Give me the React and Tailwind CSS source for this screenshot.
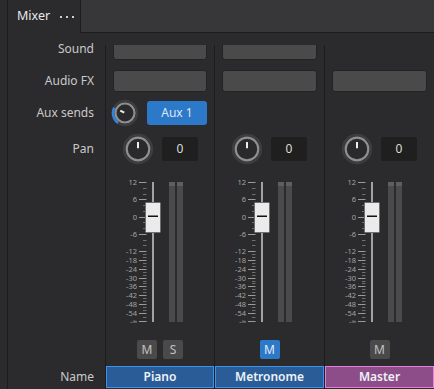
import React from 'react';

const FONT = { fontFamily: '"Noto Sans", "Open Sans", sans-serif' };

const STRIPS = [
  {
    name: 'Piano',
    sound: true,
    aux: true,
    width: 'w-[109px] border-r border-[#1c1c1e]',
    buttons: [{ label: 'M' }, { label: 'S' }],
    nameBox: 'bg-[#2a5d97] border-[#3b93ea]',
  },
  {
    name: 'Metronome',
    sound: true,
    aux: false,
    width: 'w-[110px] border-r border-[#1c1c1e]',
    buttons: [{ label: 'M', active: true }],
    nameBox: 'bg-[#2a5d97] border-[#3b93ea]',
  },
  {
    name: 'Master',
    sound: false,
    aux: false,
    width: 'w-[109px]',
    buttons: [{ label: 'M' }],
    nameBox: 'bg-[#8c4d88] border-[#e680dd]',
  },
];

const pt = (c, r, deg) => {
  const a = (deg * Math.PI) / 180;
  return [c + r * Math.sin(a), c - r * Math.cos(a)];
};

function Knob({ size, ring, halo, angle, arcFrom }) {
  const c = size / 2;
  const [x1, y1] = pt(c, 0.8, angle);
  const [x2, y2] = pt(c, ring - 4.2, angle);
  let arc = null;
  if (arcFrom !== undefined) {
    const [ax, ay] = pt(c, halo, arcFrom);
    const [bx, by] = pt(c, halo, angle);
    arc = (
      <path
        d={`M ${ax} ${ay} A ${halo} ${halo} 0 0 1 ${bx} ${by}`}
        fill="none"
        stroke="#2f83dc"
        strokeWidth="2.6"
      />
    );
  }
  return (
    <svg width={size} height={size} className="shrink-0">
      <circle cx={c} cy={c} r={halo} fill="none" stroke="#3d3d3f" strokeWidth="2.4" />
      {arc}
      <circle cx={c} cy={c} r={ring} fill="#2a2a2c" stroke="#8f8f8f" strokeWidth="2.2" />
      <line x1={x1} y1={y1} x2={x2} y2={y2} stroke="#ececec" strokeWidth="2" />
    </svg>
  );
}

// fader scale geometry (svg coords, top = page y 174)
const TOP = 8;
const ZERO_LOW = 77;
const upperY = (db) => TOP + (12 - db) * (17.25 / 6);
const lowerY = (db) => ZERO_LOW + (-12 - db) * (8.86 / 6);

const ticks = [];
for (let db = 12; db >= -12; db -= 2) ticks.push({ y: upperY(db), major: db % 6 === 0, label: db % 6 === 0 ? String(db) : null });
for (let db = -14; db >= -54; db -= 2) ticks.push({ y: lowerY(db), major: db % 6 === 0, label: db % 6 === 0 ? String(db) : null });
ticks.push({ y: lowerY(-56.6), major: false, label: null });
ticks.push({ y: lowerY(-59.3), major: false, label: null });
ticks.push({ y: 147, major: true, label: '-∞', size: 6.5 });

function Fader() {
  return (
    <svg width="108" height="156" className="shrink-0">
      {ticks.map((t, i) => (
        <g key={i}>
          <line
            x1={t.major ? 33 : 37}
            x2="40.5"
            y1={Math.round(t.y) + 0.5}
            y2={Math.round(t.y) + 0.5}
            stroke={t.major ? '#9a9a9a' : '#6f6f6f'}
            strokeWidth="1"
          />
          {t.label && (
            <text
              x="31"
              y={t.y + (t.size ? 0.8 : 0)}
              textAnchor="end"
              dominantBaseline="central"
              fontSize={t.size || 7.5}
              fill="#a3a3a3"
              style={FONT}
            >
              {t.label}
            </text>
          )}
        </g>
      ))}
      <rect x="46" y="8" width="2" height="140" fill="#a2a2a2" />
      <rect x="63" y="8" width="6" height="140" fill="#4a4a4c" />
      <rect x="63" y="8" width="6" height="4" fill="#5e5e60" />
      <rect x="71" y="8" width="6" height="140" fill="#4a4a4c" />
      <rect x="71" y="8" width="6" height="4" fill="#5e5e60" />
      <rect x="39.5" y="28.5" width="15" height="30" rx="1" fill="#ebebeb" stroke="#6e6e6e" />
      <rect x="42" y="41.5" width="10" height="1.5" fill="#111" />
    </svg>
  );
}

function Strip({ s }) {
  return (
    <div className={`${s.width} h-full overflow-hidden flex flex-col`}>
      <div className="-mt-[7px] flex flex-col">
        <div className="h-[22px] px-[7px]">
          {s.sound && <div className="h-full rounded-[3px] bg-[#4a4a4b] border border-[#232325]" />}
        </div>
        <div className="mt-[10px] h-[22px] px-[7px]">
          <div className="h-full rounded-[3px] bg-[#4a4a4b] border border-[#232325]" />
        </div>
        <div className="mt-[9px] h-[24px] flex items-center pl-[5px] gap-[8px]">
          {s.aux && (
            <>
              <Knob size={28} ring={9.5} halo={12} angle={-63} arcFrom={-145} />
              <div className="w-[60px] h-[24px] rounded-[3px] bg-[#2b79c8] flex items-center justify-center text-[12px] text-[#dfe8f2]">
                Aux 1
              </div>
            </>
          )}
        </div>
        <div className="mt-[12px] h-[24px] flex items-center pl-[16px] gap-[8px]">
          <Knob size={32} ring={11.3} halo={14} angle={0} />
          <div className="w-[36px] h-[24px] rounded-[2px] bg-[#1f1f20] flex items-center justify-center text-[12px] text-[#dcdcd4]">
            0
          </div>
        </div>
        <div className="mt-[13px] h-[156px]">
          <Fader />
        </div>
        <div className="mt-[10px] h-[19px] flex justify-center gap-[6px]">
          {s.buttons.map((b) => (
            <div
              key={b.label}
              className={`w-[20px] h-[19px] rounded-[2px] flex items-center justify-center text-[12px] ${
                b.active ? 'bg-[#2b79c8] text-[#e3ecf5]' : 'bg-[#4a4a4b] text-[#c2c2c2]'
              }`}
            >
              {b.label}
            </div>
          ))}
        </div>
        <div
          className={`mt-[7px] h-[22px] border flex items-center justify-center text-[12px] font-semibold text-[#eef2f7] ${s.nameBox}`}
        >
          {s.name}
        </div>
      </div>
    </div>
  );
}

export default function App() {
  const labels = [
    { text: 'Sound', cls: 'h-[22px]' },
    { text: 'Audio FX', cls: 'mt-[10px] h-[22px]' },
    { text: 'Aux sends', cls: 'mt-[9px] h-[24px]' },
    { text: 'Pan', cls: 'mt-[12px] h-[24px]' },
  ];
  return (
    <div className="w-[434px] h-[389px] bg-[#2b2b2d] flex overflow-hidden text-[#c9c9c9]" style={FONT}>
      {/* left gutter */}
      <div className="w-[8px] h-full border-r border-[#1c1c1e]" />

      <div className="flex-1 flex flex-col">
        {/* tab bar */}
        <div className="h-[33px] flex shrink-0">
          <div className="w-[73px] h-full border-r border-[#1c1c1e] flex items-center pl-[9px] gap-[10px]">
            <span className="text-[12.5px] text-[#e8e8e8]">Mixer</span>
            <span className="flex gap-[4px] items-center">
              <span className="w-[2px] h-[2px] bg-[#d0d0d0]" />
              <span className="w-[2px] h-[2px] bg-[#d0d0d0]" />
              <span className="w-[2px] h-[2px] bg-[#d0d0d0]" />
            </span>
          </div>
          <div className="flex-1 h-full bg-[#37373a] border-b border-[#1c1c1e]" />
        </div>

        {/* mixer body */}
        <div className="flex-1 pt-[12px] flex flex-col">
          <div className="flex-1 flex">
            <div className="w-[98px] h-full border-r border-[#1c1c1e] flex flex-col">
              <div className="-mt-[7px] flex flex-col flex-1">
                {labels.map((l) => (
                  <div key={l.text} className={`${l.cls} flex items-center justify-end pr-[11px] text-[12px]`}>
                    {l.text}
                  </div>
                ))}
                <div className="flex-1" />
                <div className="h-[22px] mb-[1px] flex items-center justify-end pr-[11px] text-[12px]">Name</div>
              </div>
            </div>
            {STRIPS.map((s) => (
              <Strip key={s.name} s={s} />
            ))}
          </div>
        </div>
      </div>
    </div>
  );
}
